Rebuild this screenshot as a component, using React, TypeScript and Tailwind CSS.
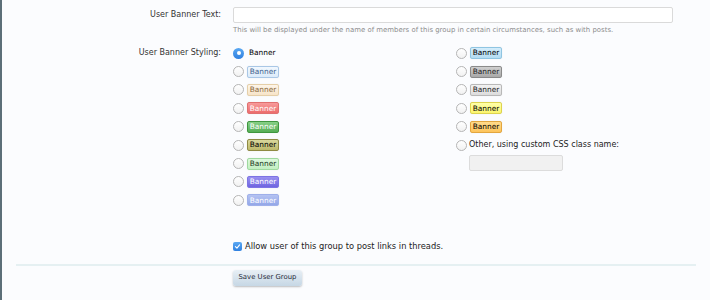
import React from 'react';

const font = { fontFamily: '"DejaVu Sans", Verdana, sans-serif' };

type BannerStyle = { cls: string };

const left: BannerStyle[] = [
  { cls: 'text-black' },
  { cls: 'bg-linear-to-b from-[#f2f8fe] to-[#dcebfa] border-[#a9c7e6] text-[#44638f]' },
  { cls: 'bg-linear-to-b from-[#fdf5ea] to-[#f7e4c8] border-[#e5cfa8] text-[#8c6a3e]' },
  { cls: 'bg-linear-to-b from-[#f79a9a] to-[#ec6c6c] border-[#e07070] text-white' },
  { cls: 'bg-linear-to-b from-[#86cf86] to-[#55ad55] border-[#3f963f] text-white' },
  { cls: 'bg-linear-to-b from-[#d9d79c] to-[#bdb96c] border-[#8f8a44] text-black' },
  { cls: 'bg-linear-to-b from-[#dcf8dc] to-[#c2efc2] border-[#9fd99f] text-[#1d3a1d]' },
  { cls: 'bg-linear-to-b from-[#9990f0] to-[#6f64e0] border-[#7d74e4] text-white' },
  { cls: 'bg-linear-to-b from-[#b5c3f2] to-[#93a7e8] border-[#9fb0ea] text-white' },
];

const right: BannerStyle[] = [
  { cls: 'bg-linear-to-b from-[#d4edfb] to-[#b4dcf2] border-[#8fc5e2] text-black' },
  { cls: 'bg-linear-to-b from-[#d0d0d0] to-[#a8a8a8] border-[#8a8a8a] text-[#1e1e1e]' },
  { cls: 'bg-linear-to-b from-[#f2f2f2] to-[#dcdcdc] border-[#b8b8b8] text-[#1e1e1e]' },
  { cls: 'bg-linear-to-b from-[#ffffa8] to-[#fbf56c] border-[#ddd34e] text-black' },
  { cls: 'bg-linear-to-b from-[#ffdb8c] to-[#fdc45a] border-[#e3a63e] text-black' },
];

function Radio({ checked }: { checked?: boolean }) {
  if (checked) {
    return (
      <span className="w-[11px] h-[11px] rounded-full bg-linear-to-b from-[#5aa8f2] to-[#2f80e0] flex items-center justify-center shrink-0">
        <span className="w-[4px] h-[4px] rounded-full bg-white" />
      </span>
    );
  }
  return (
    <span className="w-[11px] h-[11px] rounded-full border border-[#b5b5b5] bg-linear-to-b from-white to-[#f1f1f1] shrink-0" />
  );
}

function BannerRow({ b, checked }: { b: BannerStyle; checked?: boolean }) {
  const boxed = !checked;
  return (
    <div className="h-[18.4px] flex items-center gap-[2px]">
      <Radio checked={checked} />
      {boxed ? (
        <span
          className={`ml-[1px] w-[32px] h-[12px] border rounded-[2px] flex items-center justify-center text-[7.4px] leading-none shadow-[0_0_1px_rgba(0,0,0,0.15)] ${b.cls}`}
        >
          Banner
        </span>
      ) : (
        <span className="ml-[3px] text-[7.4px] leading-none text-black">Banner</span>
      )}
    </div>
  );
}

export default function App() {
  return (
    <div className="w-[710px] h-[300px] bg-[#fbfcfe] border-l-[2px] border-[#5c6f78] overflow-hidden" style={font}>
      <div className="pt-[7px]">
        <div className="flex">
          <div className="w-[219px] text-right text-[8px] leading-[16px] text-[#333]">User Banner Text:</div>
          <div className="ml-[12px]">
            <div className="w-[440px] h-[16px] bg-white border border-[#dadada] rounded-[2px]" />
            <div className="mt-[3px] text-[6.95px] leading-[9px] text-[#8e8e8e] whitespace-nowrap">
              This will be displayed under the name of members of this group in certain circumstances, such as with posts.
            </div>
          </div>
        </div>

        <div className="flex mt-[9px]">
          <div className="w-[219px] text-right text-[8px] leading-[18.4px] text-[#333]">User Banner Styling:</div>
          <div className="ml-[12px] flex">
            <div className="w-[223px] flex flex-col">
              {left.map((b, i) => (
                <BannerRow key={i} b={b} checked={i === 0} />
              ))}
            </div>
            <div className="flex flex-col">
              {right.map((b, i) => (
                <BannerRow key={i} b={b} />
              ))}
              <div className="h-[18.4px] flex items-center gap-[2px]">
                <Radio />
                <span className="text-[8px] leading-none text-[#222]">Other, using custom CSS class name:</span>
              </div>
              <div className="ml-[13px] mt-[1px] w-[94px] h-[16px] bg-[#f1f1f1] border border-[#dcdcdc] rounded-[2px]" />
            </div>
          </div>
        </div>

        <div className="flex mt-[31px]">
          <div className="w-[219px]" />
          <div className="ml-[12px] h-[12px] flex items-center gap-[3px]">
            <span className="w-[9px] h-[9px] rounded-[2px] bg-linear-to-b from-[#5aa8f2] to-[#2f80e0] flex items-center justify-center">
              <svg viewBox="0 0 10 10" className="w-[7px] h-[7px]">
                <path d="M2 5.2 L4.2 7.3 L8 2.6" fill="none" stroke="white" strokeWidth="1.6" strokeLinecap="round" strokeLinejoin="round" />
              </svg>
            </span>
            <span className="text-[8.3px] leading-none text-[#222]">Allow user of this group to post links in threads.</span>
          </div>
        </div>

        <div className="mt-[11px] ml-[14px] w-[680px] h-[2px] bg-[#e5f0f2]" />

        <div className="flex mt-[4px]">
          <div className="w-[219px]" />
          <button className="ml-[12px] w-[69px] h-[16px] rounded-[3px] bg-linear-to-b from-[#e8eff5] to-[#c6d7e5] shadow-[0_1px_2px_rgba(0,0,0,0.25)] text-[6.9px] leading-none text-[#1e2a36]">
            Save User Group
          </button>
        </div>
      </div>
    </div>
  );
}
